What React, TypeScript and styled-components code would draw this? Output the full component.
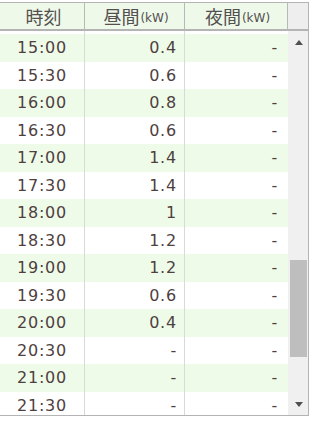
import React, { useLayoutEffect, useRef } from "react";
import styled, { createGlobalStyle } from "styled-components";

const Global = createGlobalStyle`
  html, body { margin: 0; padding: 0; background: #ffffff; }
  body { font-family: "DejaVu Sans", "Noto Sans CJK JP", sans-serif; }
`;

const ROW_H = 27.5;
const VIEW_H = 384;
const ARROW_H = 22;
const SCROLL_TOP = 822;

type Row = { time: string; day: string; night: string };

const dayMap: Record<string, string> = {
  "7:00": "0.2", "7:30": "0.4", "8:00": "0.6", "8:30": "0.8", "9:00": "0.8",
  "9:30": "1", "10:00": "1.2", "10:30": "1", "11:00": "0.8", "11:30": "1.2",
  "12:00": "1.4", "12:30": "1.2", "13:00": "0.8", "13:30": "0.6", "14:00": "0.4",
  "14:30": "0.4", "15:00": "0.4", "15:30": "0.6", "16:00": "0.8", "16:30": "0.6",
  "17:00": "1.4", "17:30": "1.4", "18:00": "1", "18:30": "1.2", "19:00": "1.2",
  "19:30": "0.6", "20:00": "0.4",
};

const rows: Row[] = Array.from({ length: 49 }, (_, i) => {
  const h = Math.floor(i / 2);
  const time = `${h}:${i % 2 === 0 ? "00" : "30"}`;
  return { time, day: dayMap[time] ?? "-", night: "-" };
});

const Frame = styled.div`
  width: 308px;
  margin-top: 2px;
  border-top: 1px solid #b4b4b4;
  border-right: 1px solid #b4b4b4;
  border-bottom: 1px solid #b4b4b4;
  color: #4f3f3f;
`;

const Header = styled.div`
  display: grid;
  grid-template-columns: 85px 100px 103px 20px;
  height: 26px;
  border-bottom: 2px solid #b4b4b4;
  background: #eef9ea;
`;

const HeadCell = styled.div<{ $cap?: boolean }>`
  display: flex;
  align-items: center;
  justify-content: center;
  padding-left: ${(p) => (p.$cap ? "0" : "3px")};
  border-right: ${(p) => (p.$cap ? "none" : "1px solid #b8b8b8")};
  background: ${(p) => (p.$cap ? "#eeeeee" : "transparent")};
  font-size: 18px;
  color: #555050;
  white-space: nowrap;
`;

const Unit = styled.span`
  font-size: 12px;
  margin-left: 1px;
  padding-top: 3px;
`;

const BodyArea = styled.div`
  display: flex;
  height: ${VIEW_H}px;
`;

const Viewport = styled.div`
  width: 288px;
  height: 100%;
  overflow: hidden;
`;

const RowLine = styled.div<{ $alt: boolean }>`
  display: grid;
  grid-template-columns: 85px 100px 103px;
  height: ${ROW_H}px;
  background: ${(p) => (p.$alt ? "#eefbe9" : "#ffffff")};
`;

const Cell = styled.div<{ $align: "center" | "right"; $pad?: number; $line?: boolean }>`
  display: flex;
  align-items: center;
  justify-content: ${(p) => (p.$align === "center" ? "center" : "flex-end")};
  padding-right: ${(p) => p.$pad ?? 0}px;
  border-right: ${(p) => (p.$line ? "1px solid #d9d9d9" : "none")};
  font-size: 16px;
  letter-spacing: 0.8px;
`;

const Scrollbar = styled.div`
  width: 20px;
  display: flex;
  flex-direction: column;
  background: #f0f0f0;
`;

const ArrowBtn = styled.div`
  height: ${ARROW_H}px;
  display: flex;
  align-items: center;
  justify-content: center;
  padding-left: 2px;
`;

const Triangle = styled.div<{ $dir: "up" | "down" }>`
  width: 0;
  height: 0;
  border-left: 4.5px solid transparent;
  border-right: 4.5px solid transparent;
  ${(p) =>
    p.$dir === "up"
      ? "border-bottom: 5px solid #505050;"
      : "border-top: 5px solid #505050;"}
`;

const Track = styled.div`
  flex: 1;
  display: flex;
  flex-direction: column;
`;

const Thumb = styled.div`
  margin-left: 2px;
  margin-right: 1px;
  background: #bebebe;
`;

export default function App() {
  const ref = useRef<HTMLDivElement>(null);

  useLayoutEffect(() => {
    if (ref.current) ref.current.scrollTop = SCROLL_TOP;
  }, []);

  const contentH = rows.length * ROW_H;
  const trackH = VIEW_H - ARROW_H * 2;
  const thumbH = (trackH * VIEW_H) / contentH;
  const thumbTop = ((trackH - thumbH) * SCROLL_TOP) / (contentH - VIEW_H);

  return (
    <>
      <Global />
      <Frame>
        <Header>
          <HeadCell>時刻</HeadCell>
          <HeadCell>
            昼間<Unit>(kW)</Unit>
          </HeadCell>
          <HeadCell>
            夜間<Unit>(kW)</Unit>
          </HeadCell>
          <HeadCell $cap />
        </Header>
        <BodyArea>
          <Viewport ref={ref}>
            {rows.map((r, i) => (
              <RowLine key={r.time} $alt={i % 2 === 0}>
                <Cell $align="center" $line>
                  {r.time}
                </Cell>
                <Cell $align="right" $pad={7} $line>
                  {r.day}
                </Cell>
                <Cell $align="right" $pad={10}>
                  {r.night}
                </Cell>
              </RowLine>
            ))}
          </Viewport>
          <Scrollbar>
            <ArrowBtn>
              <Triangle $dir="up" />
            </ArrowBtn>
            <Track>
              <Thumb style={{ marginTop: thumbTop, height: thumbH }} />
            </Track>
            <ArrowBtn>
              <Triangle $dir="down" />
            </ArrowBtn>
          </Scrollbar>
        </BodyArea>
      </Frame>
    </>
  );
}
